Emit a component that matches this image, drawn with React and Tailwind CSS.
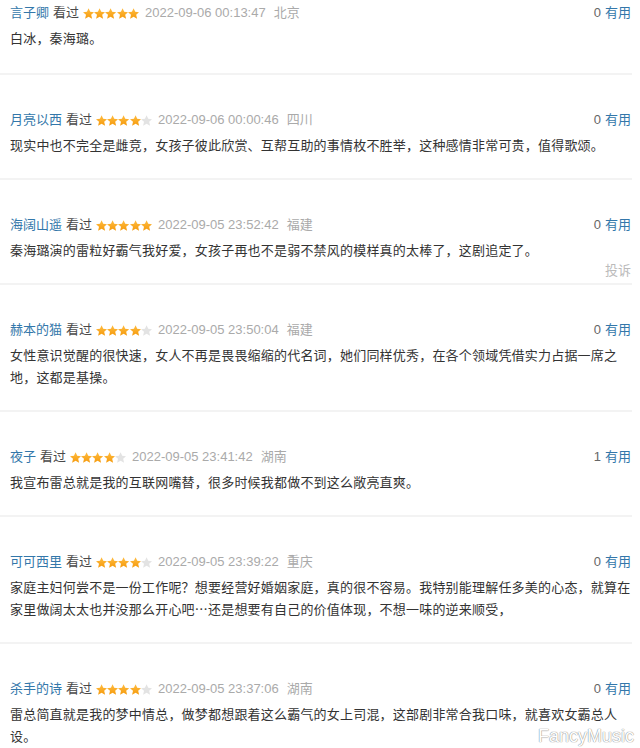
import React from 'react'

const comments = [
  { name: '言子卿', stars: 5, time: '2022-09-06 00:13:47', loc: '北京', votes: 0, text: '白冰，秦海璐。' },
  { name: '月亮以西', stars: 4, time: '2022-09-06 00:00:46', loc: '四川', votes: 0, text: '现实中也不完全是雌竞，女孩子彼此欣赏、互帮互助的事情枚不胜举，这种感情非常可贵，值得歌颂。' },
  { name: '海阔山遥', stars: 5, time: '2022-09-05 23:52:42', loc: '福建', votes: 0, text: '秦海璐演的雷粒好霸气我好爱，女孩子再也不是弱不禁风的模样真的太棒了，这剧追定了。', hover: true },
  { name: '赫本的猫', stars: 4, time: '2022-09-05 23:50:04', loc: '福建', votes: 0, text: '女性意识觉醒的很快速，女人不再是畏畏缩缩的代名词，她们同样优秀，在各个领域凭借实力占据一席之地，这都是基操。' },
  { name: '夜子', stars: 4, time: '2022-09-05 23:41:42', loc: '湖南', votes: 1, text: '我宣布雷总就是我的互联网嘴替，很多时候我都做不到这么敞亮直爽。' },
  { name: '可可西里', stars: 4, time: '2022-09-05 23:39:22', loc: '重庆', votes: 0, text: '家庭主妇何尝不是一份工作呢？想要经营好婚姻家庭，真的很不容易。我特别能理解任多美的心态，就算在家里做阔太太也并没那么开心吧…还是想要有自己的价值体现，不想一味的逆来顺受，' },
  { name: '杀手的诗', stars: 4, time: '2022-09-05 23:37:06', loc: '湖南', votes: 0, text: '雷总简直就是我的梦中情总，做梦都想跟着这么霸气的女上司混，这部剧非常合我口味，就喜欢女霸总人设。' },
]

function Star({ on }) {
  return (
    <svg width="11.2" height="11" viewBox="1.4 1.5 21.2 20.2" className="block">
      <defs>
        <linearGradient id="sg" x1="0" y1="0" x2="0" y2="1">
          <stop offset="0" stopColor="#ffbd42" />
          <stop offset="1" stopColor="#f59a0c" />
        </linearGradient>
      </defs>
      <polygon
        points="12,1.5 15.1,8.4 22.6,9.1 16.9,14.1 18.6,21.5 12,17.6 5.4,21.5 7.1,14.1 1.4,9.1 8.9,8.4"
        fill={on ? 'url(#sg)' : '#e3e3e3'}
      />
    </svg>
  )
}

function Comment({ c, first }) {
  return (
    <div className={first ? 'pt-[3px]' : 'pt-[35px]'}>
      <div className="pl-[10px] pr-px">
        <div className="flex h-5 items-center text-[13px]">
          <span className="text-[#3377aa]">{c.name}</span>
          <span className="ml-1 text-[#494949]">看过</span>
          <span className="ml-1 flex">
            {[0, 1, 2, 3, 4].map(i => (
              <Star key={i} on={i < c.stars} />
            ))}
          </span>
          <span className="ml-[6px] text-[#aaaaaa]">{c.time}</span>
          <span className="ml-[8px] text-[#aaaaaa]">{c.loc}</span>
          <span className="ml-auto text-[#666]">{c.votes}</span>
          <span className="ml-1 text-[#3377aa]">有用</span>
        </div>
        <p
          className="mt-[4px] text-[13px] leading-[22px] tracking-[0.2px] text-[#333]"
          style={{ fontFamily: '"Noto Sans CJK SC", sans-serif' }}
        >
          {c.text}
        </p>
        <div className="flex h-5 items-center justify-end text-[13px] text-[#bbbbbb]">
          <span className={c.hover ? '' : 'invisible'}>投诉</span>
        </div>
      </div>
      <div className={(first ? 'mt-[4px]' : 'mt-[2px]') + ' h-[2px] bg-[#f3f3f3]'} />
    </div>
  )
}

export default function App() {
  return (
    <div
      className="relative h-[748px] w-[640px] overflow-hidden bg-white"
      style={{ fontFamily: '"Liberation Sans", "Noto Sans CJK SC", sans-serif' }}
    >
      <div className="w-[632px]">
        {comments.map((c, i) => (
          <Comment key={i} c={c} first={i === 0} />
        ))}
      </div>
      <div className="absolute bottom-[2px] right-[6px] text-[18px] leading-[20px] text-white [text-shadow:0_0_1px_#888,0_0_1px_#888]">
        FancyMusic
      </div>
    </div>
  )
}
